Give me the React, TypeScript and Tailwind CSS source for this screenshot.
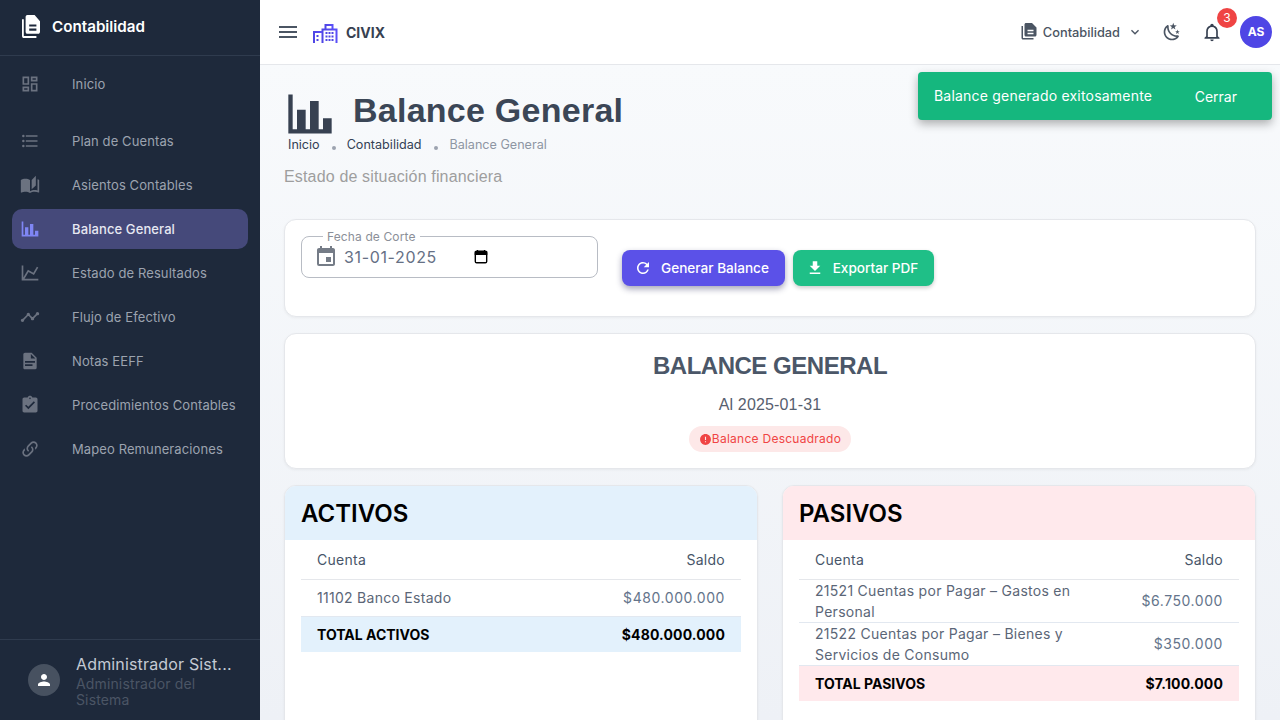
import type { ReactNode } from "react";
import { MdTimeline, MdAssignmentTurnedIn, MdPerson, MdMenu, MdExpandMore, MdEvent, MdRefresh, MdFileDownload, MdError } from "react-icons/md";

function Mdi({ d, className }: { d: string; className?: string }) {
  return (
    <svg viewBox="0 0 24 24" fill="currentColor" className={className}>
      <path d={d} />
    </svg>
  );
}

const paths = {
  dashboard: "M19,5V7H15V5H19M9,5V11H5V5H9M19,13V19H15V13H19M9,17V19H5V17H9M21,3H13V9H21V3M11,3H3V13H11V3M21,11H13V21H21V11M11,15H3V21H11V15Z",
  list: "M7,5H21V7H7V5M7,13V11H21V13H7M4,4.5A1.5,1.5 0 0,1 5.5,6A1.5,1.5 0 0,1 4,7.5A1.5,1.5 0 0,1 2.5,6A1.5,1.5 0 0,1 4,4.5M4,10.5A1.5,1.5 0 0,1 5.5,12A1.5,1.5 0 0,1 4,13.5A1.5,1.5 0 0,1 2.5,12A1.5,1.5 0 0,1 4,10.5M7,19V17H21V19H7M4,16.5A1.5,1.5 0 0,1 5.5,18A1.5,1.5 0 0,1 4,19.5A1.5,1.5 0 0,1 2.5,18A1.5,1.5 0 0,1 4,16.5Z",
  book: "M19 1L14 6V17L19 12.5V1M21 5V18.5C19.9 18.15 18.7 18 17.5 18C15.8 18 13.35 18.65 12 19.5V6C10.55 4.9 8.45 4.5 6.5 4.5C4.55 4.5 2.45 4.9 1 6V20.65C1 20.9 1.25 21.15 1.5 21.15C1.6 21.15 1.65 21.1 1.75 21.1C3.1 20.45 5.05 20 6.5 20C8.45 20 10.55 20.4 12 21.5C13.35 20.65 15.8 20 17.5 20C19.15 20 20.85 20.3 22.25 21.05C22.35 21.1 22.4 21.1 22.5 21.1C22.75 21.1 23 20.85 23 20.6V6C22.4 5.55 21.75 5.25 21 5Z",
  chartBar: "M22,21H2V3H4V19H6V10H10V19H12V6H16V19H18V14H22V21Z",
  chartLine: "M16,11.78L20.24,4.45L21.97,5.45L16.74,14.5L10.23,10.75L5.46,19H22V21H2V3H4V17.54L9.5,8L16,11.78Z",
  fileDoc: "M13,9H18.5L13,3.5V9M6,2H14L20,8V20A2,2 0 0,1 18,22H6C4.89,22 4,21.1 4,20V4C4,2.89 4.89,2 6,2M15,18V16H6V18H15M18,14V12H6V14H18Z",
  link: "M10.59,13.41C11,13.8 11,14.44 10.59,14.83C10.2,15.22 9.56,15.22 9.17,14.83C7.22,12.88 7.22,9.71 9.17,7.76V7.76L12.71,4.22C14.66,2.27 17.83,2.27 19.78,4.22C21.73,6.17 21.73,9.34 19.78,11.29L18.29,12.78C18.3,11.96 18.17,11.14 17.89,10.36L18.36,9.88C19.54,8.71 19.54,6.81 18.36,5.64C17.19,4.46 15.29,4.46 14.12,5.64L10.59,9.17C9.41,10.34 9.41,12.24 10.59,13.41M13.41,9.17C13.8,8.78 14.44,8.78 14.83,9.17C16.78,11.12 16.78,14.29 14.83,16.24V16.24L11.29,19.78C9.34,21.73 6.17,21.73 4.22,19.78C2.27,17.83 2.27,14.66 4.22,12.71L5.71,11.22C5.7,12.04 5.83,12.86 6.11,13.65L5.64,14.12C4.46,15.29 4.46,17.19 5.64,18.36C6.81,19.54 8.71,19.54 9.88,18.36L13.41,14.83C14.59,13.66 14.59,11.76 13.41,10.59C13,10.2 13,9.56 13.41,9.17Z",
  files: "M16 0H8C6.9 0 6 .9 6 2V16C6 17.1 6.9 18 8 18H20C21.1 18 22 17.1 22 16V6L16 0M18 15H10V13H18V15M18 11H10V9H18V11M4 4V20H18V22H4C2.9 22 2 21.1 2 20V4H4Z",
  moon: "M17.75,4.09L15.22,6.03L16.13,9.09L13.5,7.28L10.87,9.09L11.78,6.03L9.25,4.09L12.44,4L13.5,1L14.56,4L17.75,4.09M21.25,11L19.61,12.26L20.2,14.25L18.5,13.07L16.8,14.25L17.39,12.26L15.75,11L17.81,10.95L18.5,9L19.19,10.95L21.25,11M18.97,15.95C19.8,15.87 20.69,17.05 20.16,17.8C19.84,18.25 19.5,18.67 19.08,19.07C15.17,23 8.84,23 4.94,19.07C1.03,15.17 1.03,8.83 4.94,4.93C5.34,4.53 5.76,4.17 6.21,3.85C6.96,3.32 8.14,4.21 8.06,5.04C7.79,7.9 8.75,10.87 10.95,13.06C13.14,15.26 16.1,16.22 18.97,15.95M17.33,17.97C14.5,17.81 11.7,16.64 9.53,14.5C7.36,12.31 6.2,9.5 6.04,6.68C3.23,9.82 3.34,14.64 6.35,17.66C9.37,20.67 14.19,20.78 17.33,17.97Z",
  bell: "M10 21H14C14 22.1 13.1 23 12 23S10 22.1 10 21M21 19V20H3V19L5 17V11C5 7.9 7 5.2 10 4.3V4C10 2.9 10.9 2 12 2S14 2.9 14 4V4.3C17 5.2 19 7.9 19 11V17L21 19M17 11C17 8.2 14.8 6 12 6S7 8.2 7 11V18H17V11Z",
};

function CivixLogo() {
  return (
    <svg viewBox="0 0 25 25" className="w-[25px] h-[25px]" fill="none">
      <defs>
        <linearGradient id="civix" x1="0" y1="0" x2="1" y2="0">
          <stop offset="0" stopColor="#4f46e5" />
          <stop offset="1" stopColor="#5a4ff8" />
        </linearGradient>
      </defs>
      <path d="M16 0v5" stroke="url(#civix)" strokeWidth="2" />
      <path d="M12.5 10V6h7v4" stroke="url(#civix)" strokeWidth="2" />
      <path d="M9.5 24V10.500h14V24" stroke="url(#civix)" strokeWidth="2" />
      <path d="M1 24V13h8" stroke="url(#civix)" strokeWidth="2" />
      <path d="M0 24h25" stroke="url(#civix)" strokeWidth="1.8" />
      <path
        d="M12.5 13h2v2h-2zM15.5 13h2v2h-2zM18.5 13h2v2h-2zM12.5 16.500h2v2h-2zM15.500 16.500h2v2h-2zM18.500 16.500h2v2h-2zM12.500 20h2v2h-2zM15.500 20h2v2h-2zM18.500 20h2v2h-2zM3.500 16h2v2h-2zM3.500 20h2v2h-2z"
        fill="#4f46e5"
      />
    </svg>
  );
}

function NavItem({ icon, label, active }: { icon: ReactNode; label: string; active?: boolean }) {
  return (
    <div
      className={`flex items-center h-10 rounded-[10px] px-2 mb-1 ${
        active ? "bg-[#45497a] text-[#e7e8f2]" : "text-[#9ca3af]"
      }`}
    >
      <span className={`w-[52px] shrink-0 ${active ? "text-[#7f86f4]" : "text-[#6b7280]"}`}>{icon}</span>
      <span className={`pt-[2px] text-[13px] tracking-[0.008em] ${active ? "font-medium" : "font-normal"}`}>{label}</span>
    </div>
  );
}

function Sidebar() {
  const iconCls = "w-5 h-5 block";
  return (
    <aside className="w-[260px] shrink-0 h-full bg-[#1e293b] flex flex-col">
      <div className="h-[56px] shrink-0 flex items-center pl-[20px] pb-[2px] border-b border-[#2f3b4e]">
        <svg viewBox="2 0 20 22" preserveAspectRatio="none" fill="currentColor" className="ml-[2px] w-[18px] h-[23px] text-white">
          <path d={paths.files} />
        </svg>
        <span className="ml-3 pt-[2px] text-[15.2px] font-semibold text-white">Contabilidad</span>
      </div>
      <nav className="flex-1 px-3 pt-2">
        <NavItem icon={<Mdi d={paths.dashboard} className={iconCls} />} label="Inicio" />
        <div className="h-[13px]" />
        <NavItem icon={<Mdi d={paths.list} className={iconCls} />} label="Plan de Cuentas" />
        <NavItem icon={<Mdi d={paths.book} className={iconCls} />} label="Asientos Contables" />
        <NavItem icon={<Mdi d={paths.chartBar} className={iconCls} />} label="Balance General" active />
        <NavItem icon={<Mdi d={paths.chartLine} className={iconCls} />} label="Estado de Resultados" />
        <NavItem icon={<MdTimeline className={iconCls} />} label="Flujo de Efectivo" />
        <NavItem icon={<Mdi d={paths.fileDoc} className={iconCls} />} label="Notas EEFF" />
        <NavItem icon={<MdAssignmentTurnedIn className={iconCls} />} label="Procedimientos Contables" />
        <NavItem icon={<Mdi d={paths.link} className={iconCls} />} label="Mapeo Remuneraciones" />
      </nav>
      <div className="h-[81px] shrink-0 border-t border-[#2f3b4e] flex items-start pl-7 pr-6 pt-[14px]">
        <div className="w-8 h-8 mt-[10px] rounded-full bg-[#475160] flex items-center justify-center shrink-0">
          <MdPerson className="w-[18px] h-[18px] text-white" />
        </div>
        <div className="ml-4 min-w-0">
          <div className="text-[16px] leading-[20px] text-[#c4cad4] tracking-[0.01em] whitespace-nowrap">
            Administrador Sist...
          </div>
          <div className="text-[14px] leading-[16px] text-[#4b5565] tracking-[0.01em] mt-[2px]">
            Administrador del Sistema
          </div>
        </div>
      </div>
    </aside>
  );
}

function Topbar() {
  return (
    <header className="h-[65px] shrink-0 bg-white border-b border-[#e5e7eb] flex items-center pl-[16px] pr-2">
      <MdMenu className="w-6 h-6 text-[#4b5563]" />
      <div className="ml-[13px] -mt-[2px]">
        <CivixLogo />
      </div>
      <span className="ml-2 text-[14px] font-bold text-[#374151]">CIVIX</span>
      <div className="ml-auto flex items-center">
        <Mdi d={paths.files} className="w-[18px] h-[18px] text-[#4b5563]" />
        <span className="ml-[5px] mt-[2px] text-[12.8px] font-medium text-[#4b5563]">Contabilidad</span>
        <MdExpandMore className="ml-[7px] w-4 h-4 text-[#4b5563]" />
        <Mdi d={paths.moon} className="ml-[19px] w-5 h-5 text-[#4b5563]" />
        <div className="relative ml-[20px]">
          <Mdi d={paths.bell} className="w-5 h-5 text-[#374151]" />
          <span className="absolute -top-[14px] left-[15px] w-5 h-5 rounded-full bg-[#ef4444] text-white text-[12px] flex items-center justify-center">
            3
          </span>
        </div>
        <div className="ml-[18px] w-8 h-8 rounded-full bg-[#4f46e5] text-white text-[12px] font-bold flex items-center justify-center">
          AS
        </div>
      </div>
    </header>
  );
}

function BalanceTable({
  title,
  headBg,
  totalLabel,
  total,
  rows,
}: {
  title: string;
  headBg: string;
  totalLabel: string;
  total: string;
  rows: { name: string; value: string }[];
}) {
  const tall = rows.length > 1;
  return (
    <div className="h-[300px] bg-white rounded-xl border border-[#e5e7eb] overflow-hidden shadow-[0_1px_3px_rgba(0,0,0,0.05)]">
      <div className={`h-[54px] flex items-center px-4 pt-[2px] ${headBg}`}>
        <h2 className="text-[24px] font-semibold text-black">{title}</h2>
      </div>
      <div className="px-4">
        <table className="w-full border-collapse text-[14px] tracking-[0.02em]">
          <thead>
            <tr className="h-[39px] border-b border-[#e5e7eb] text-[#475569]">
              <th className="px-4 text-left font-normal">Cuenta</th>
              <th className="px-4 text-right font-normal">Saldo</th>
            </tr>
          </thead>
          <tbody>
            {rows.map((r) => (
              <tr key={r.name} className={`border-b border-[#e2e8f0] text-[#64748b] ${tall ? "h-[43px]" : "h-[37px]"}`}>
                <td className="px-4 leading-[21px] text-[#5b6677]">{r.name}</td>
                <td className="px-4 text-right whitespace-nowrap tracking-[0.04em]">{r.value}</td>
              </tr>
            ))}
            <tr className={`h-[36px] font-bold text-black ${headBg}`}>
              <td className="px-4 text-[14px] tracking-normal">{totalLabel}</td>
              <td className="px-4 text-right tracking-[0.01em]">{total}</td>
            </tr>
          </tbody>
        </table>
      </div>
    </div>
  );
}

export default function App() {
  return (
    <div className="w-[1280px] h-[720px] flex overflow-hidden font-['Inter',sans-serif]">
      <Sidebar />
      <div className="relative flex-1 min-w-0 flex flex-col">
        <Topbar />
        <main className="flex-1 overflow-hidden bg-gradient-to-b from-[#f8fafc] to-[#eef1f6] px-6 pt-[23px]">
          <div className="flex items-center h-[48px] gap-[17px]">
            <Mdi d={paths.chartBar} className="w-[52px] h-[52px] mt-[3px] text-[#374151] shrink-0" />
            <h1 className="-mt-[4px] font-['Liberation_Sans',sans-serif] text-[34px] tracking-[0.0074em] font-bold text-[#3b4656] leading-[48px]">
              Balance General
            </h1>
          </div>
          <div className="flex items-center pl-1 h-[16px] mt-[1px] text-[12.6px]">
            <span className="text-[#334155]">Inicio</span>
            <span className="ml-[12px] mr-[11px] mt-[5px] w-1 h-1 rounded-full bg-[#9ca3af]" />
            <span className="text-[#334155]">Contabilidad</span>
            <span className="ml-[13px] mr-[11px] mt-[5px] w-1 h-1 rounded-full bg-[#9ca3af]" />
            <span className="text-[#8e96a3]">Balance General</span>
          </div>
          <p className="font-['Liberation_Sans',sans-serif] text-[16px] tracking-[0.01em] leading-[24px] text-[#9e9e9e] mt-[12px]">
            Estado de situación financiera
          </p>

          <section className="mt-[30px] h-[98px] bg-white rounded-xl border border-[#e5e7eb] px-4 pt-4 flex items-start shadow-[0_1px_3px_rgba(0,0,0,0.05)]">
            <div className="relative w-[297px] h-[42px] rounded-lg border border-[#b8bcc4] flex items-center pl-[12px]">
              <span className="absolute -top-[8px] left-[21px] bg-white px-1 text-[12px] leading-4 tracking-[0.01em] text-[#8b8f98]">
                Fecha de Corte
              </span>
              <MdEvent className="w-6 h-6 text-[#757c87]" />
              <span className="ml-[6px] text-[16px] tracking-[0.04em] text-[#667085]">31-01-2025</span>
              <svg viewBox="0 0 16 18" className="ml-[37px] w-[14px] h-4 text-black" fill="none">
                <rect x="1.5" y="2.5" width="13" height="13" rx="1.5" stroke="currentColor" strokeWidth="1.6" />
                <path d="M1.5 3h13v3h-13zM4 1v2M12 1v2" fill="currentColor" stroke="currentColor" strokeWidth="1.4" />
              </svg>
            </div>
            <div className="ml-6 mt-[14px] flex gap-2">
              <button className="h-9 w-[163px] pr-1 rounded-lg bg-[#5b51e8] text-white text-[13.6px] font-medium flex items-center justify-center gap-[9px] shadow-[0_3px_6px_rgba(30,30,80,0.4)]">
                <MdRefresh className="w-[18px] h-[18px]" />
                Generar Balance
              </button>
              <button className="h-9 w-[141px] pr-[3px] rounded-lg bg-[#1fbf87] text-white text-[13.6px] font-medium flex items-center justify-center gap-[9px] shadow-[0_2px_4px_rgba(0,0,0,0.2)]">
                <MdFileDownload className="w-[18px] h-[18px]" />
                Exportar PDF
              </button>
            </div>
          </section>

          <section className="mt-4 h-[136px] bg-white rounded-xl border border-[#e5e7eb] flex flex-col items-center pt-4 shadow-[0_1px_3px_rgba(0,0,0,0.05)]">
            <h2 className="font-['Liberation_Sans',sans-serif] text-[24px] leading-[32px] font-bold tracking-[-0.02em] text-[#4b5768]">
              BALANCE GENERAL
            </h2>
            <p className="font-['Liberation_Sans',sans-serif] text-[16px] tracking-[0.01em] leading-[24px] text-[#57606f] mt-[11px]">
              Al 2025-01-31
            </p>
            <div className="mt-[9px] h-[26px] px-[10px] rounded-full bg-[#fde8e8] text-[#f04444] text-[12px] tracking-[0.022em] flex items-center">
              <MdError className="w-[13px] h-[13px]" />
              Balance Descuadrado
            </div>
          </section>

          <div className="mt-4 grid grid-cols-2 gap-6">
            <BalanceTable
              title="ACTIVOS"
              headBg="bg-[#e3f1fc]"
              totalLabel="TOTAL ACTIVOS"
              total="$480.000.000"
              rows={[{ name: "11102 Banco Estado", value: "$480.000.000" }]}
            />
            <BalanceTable
              title="PASIVOS"
              headBg="bg-[#ffe9ec]"
              totalLabel="TOTAL PASIVOS"
              total="$7.100.000"
              rows={[
                { name: "21521 Cuentas por Pagar – Gastos en Personal", value: "$6.750.000" },
                { name: "21522 Cuentas por Pagar – Bienes y Servicios de Consumo", value: "$350.000" },
              ]}
            />
          </div>
        </main>

        <div className="absolute top-[72px] right-2 w-[354px] h-12 rounded bg-[#15b77e] text-white flex items-center pl-4 pr-[35px] justify-between shadow-[0_4px_10px_rgba(0,0,0,0.3)]">
          <span className="-mt-[2px] text-[14px] tracking-[0.015em]">Balance generado exitosamente</span>
          <span className="text-[14px] font-normal">Cerrar</span>
        </div>
      </div>
    </div>
  );
}
